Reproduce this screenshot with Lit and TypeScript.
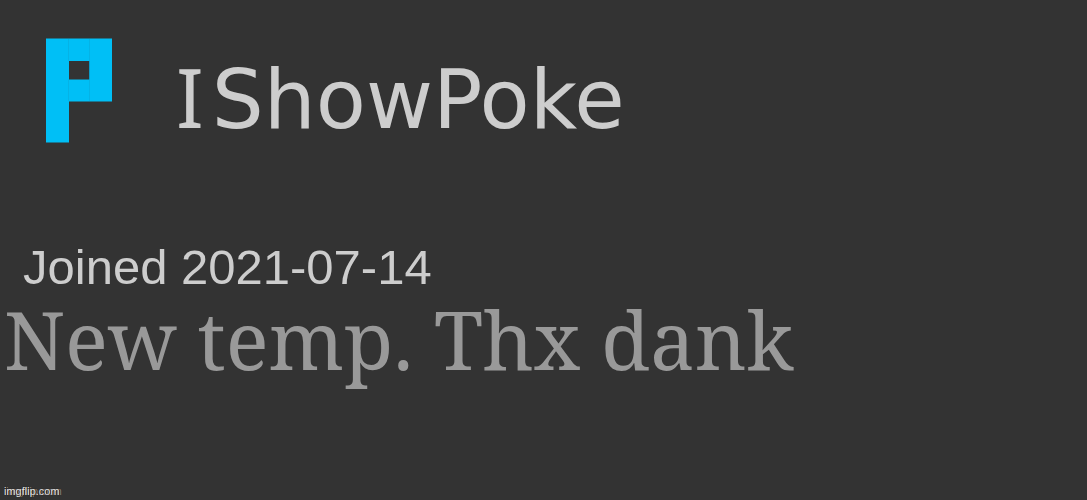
import { LitElement, html, css } from "lit";
import { customElement } from "lit/decorators.js";

@customElement("app-root")
export class AppRoot extends LitElement {
  static styles = css`
    :host {
      display: block;
      color: #cdcdcd;
      background: #333333;
    }
    .card {
      display: flex;
      flex-direction: column;
      box-sizing: border-box;
      min-height: 100vh;
      padding-top: 38px;
    }
    .head {
      display: flex;
      align-items: flex-start;
      gap: 64px;
      padding-left: 46px;
    }
    .logo {
      flex: none;
      width: 66px;
      height: 105px;
    }
    h1,
    p {
      margin: 0;
      font-weight: 400;
      white-space: nowrap;
    }
    h1 {
      padding-top: 8px;
      font: 82px/100px "DejaVu Sans", Verdana, sans-serif;
    }
    .initial {
      padding-right: 8px;
      font-family: "Noto Sans", sans-serif;
    }
    .joined {
      margin-top: 92px;
      padding-left: 23px;
      font: 49px/50px "Liberation Sans", Arial, sans-serif;
    }
    .tagline {
      padding-left: 4px;
      color: #999999;
      font: 80px/94px "Noto Serif", "Droid Serif", "DejaVu Serif", serif;
    }
    .mark {
      margin-top: auto;
      padding: 0 4px 2px;
      font: 11px/14px "Liberation Sans", Arial, sans-serif;
      color: #e4e4e4;
      text-shadow: 1px 0 1px #000000, 2px 0 0 #999999;
    }
  `;

  render() {
    return html`
      <main class="card">
        <header class="head">
          <svg class="logo" viewBox="0 0 66 105" aria-hidden="true">
            <path fill="#00bff6" fill-rule="evenodd" d="M0 0.5H66V63.5H23V104.5H0ZM23 23V41.5H43.5V23Z" />
            <path stroke="#06aee0" stroke-width="0.7" d="M22.5 1V23M22.5 41.5V63M43.5 1V63" />
          </svg>
          <h1><span class="initial">I</span>ShowPoke</h1>
        </header>
        <p class="joined">Joined 2021-07-14</p>
        <p class="tagline">New temp. Thx dank</p>
        <footer class="mark">imgflip.com</footer>
      </main>
    `;
  }
}
